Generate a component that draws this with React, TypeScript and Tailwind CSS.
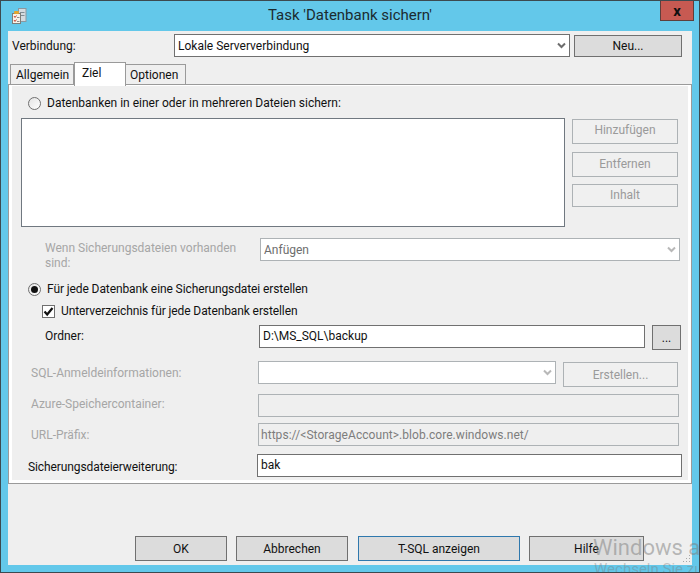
import type { ReactNode } from "react";

const FONT = "font-['Roboto','Noto_Sans',sans-serif]";

function Chevron({ muted }: { muted?: boolean }) {
  return (
    <svg width="9" height="7" viewBox="0 0 9 7" className="shrink-0">
      <path
        d="M1 1.5 L4.5 5 L8 1.5"
        fill="none"
        stroke={muted ? "#b8b8b8" : "#6d6d6d"}
        strokeWidth="2"
      />
    </svg>
  );
}

function Radio({ checked }: { checked?: boolean }) {
  return (
    <span className="w-[13px] h-[13px] shrink-0 rounded-full border border-[#6f6f6f] bg-gradient-to-br from-[#e4e4e4] to-white flex items-center justify-center">
      {checked && <span className="w-[7px] h-[7px] rounded-full bg-[#111]" />}
    </span>
  );
}

function Check() {
  return (
    <span className="w-[13px] h-[13px] shrink-0 border border-[#6f6f6f] bg-white flex items-center justify-center">
      <svg width="11" height="11" viewBox="0 0 11 11">
        <path d="M1.5 5.5 L4.2 8.5 L9.5 2" fill="none" stroke="#111" strokeWidth="2.2" />
      </svg>
    </span>
  );
}

function Btn({
  className,
  tone = "normal",
  children,
}: {
  className: string;
  tone?: "normal" | "disabled" | "focus";
  children: ReactNode;
}) {
  const toneClass =
    tone === "disabled"
      ? "border-[#adb2b5] bg-[#f0f0f0] text-[#9a9a9a]"
      : tone === "focus"
        ? "border-[#2f78ad] bg-[#dcdcdc] text-[#111]"
        : "border-[#707070] bg-[#dcdcdc] text-[#111]";
  return (
    <div className={`flex items-center justify-center border shrink-0 ${toneClass} ${className}`}>
      {children}
    </div>
  );
}

function Combo({
  className,
  disabled,
  text,
}: {
  className: string;
  disabled?: boolean;
  text?: string;
}) {
  return (
    <div
      className={`h-[23px] shrink-0 bg-white border flex items-center justify-between pl-[3px] pr-[3px] ${
        disabled ? "border-[#adb2b5] text-[#6d6d6d]" : "border-[#707070] text-[#111]"
      } ${className}`}
    >
      <span>{text}</span>
      <Chevron muted={disabled} />
    </div>
  );
}

function TaskIcon() {
  return (
    <svg width="15" height="16" viewBox="0 0 15 16">
      <rect x="6.5" y="0.5" width="7.5" height="13" fill="#d4dbe0" stroke="#8a979f" />
      <rect x="8" y="4" width="4.5" height="1" fill="#7f8c94" />
      <rect x="8" y="7" width="4.5" height="1" fill="#7f8c94" />
      <rect x="0.5" y="5.5" width="8" height="10" fill="#f6f3ea" stroke="#7d7d78" />
      <rect x="2" y="3" width="5" height="3" rx="1" fill="#e3a52f" />
      <path d="M2 8 L3 9.5 L4.5 7.5" fill="none" stroke="#c9402f" strokeWidth="1" />
      <path d="M2 12 L3 13.5 L4.5 11.5" fill="none" stroke="#c9402f" strokeWidth="1" />
      <rect x="5" y="9" width="2.5" height="1" fill="#8a8a8a" />
      <rect x="5" y="13" width="2.5" height="1" fill="#8a8a8a" />
    </svg>
  );
}

export default function App() {
  return (
    <div
      className={`${FONT} relative w-[700px] h-[573px] overflow-hidden border border-[#3c4a50] bg-[#63c8ea] text-[12px] leading-[16px] text-[#111]`}
    >
      {/* title bar */}
      <div className="h-[30px] grid grid-cols-[1fr_auto_1fr]">
        <div className="pl-[11px] pt-[7px]">
          <TaskIcon />
        </div>
        <div className="text-[15px] leading-[29px] text-[#1b2b30]">Task 'Datenbank sichern'</div>
        <div className="flex justify-end pr-[5px]">
          <div className="w-[34px] h-[21px] -mt-px bg-[#c75a52] border border-[#5e3f3c] flex items-center justify-center text-[15px] font-bold text-[#111]">
            x
          </div>
        </div>
      </div>

      <div className="mx-[7px] h-[534px] bg-[#efefef]">
        {/* connection */}
        <div className="pt-[3px] flex items-start">
          <div className="w-[166px] pl-[4px] h-[23px] leading-[24px] shrink-0">Verbindung:</div>
          <Combo className="w-[396px]" text="Lokale Serververbindung" />
          <Btn className="w-[108px] h-[22px] ml-[4px] mt-px">Neu...</Btn>
        </div>

        {/* tabs */}
        <div className="mt-[5px] h-[22px] pl-[2px] flex items-end">
          <div className="w-[64px] h-[20px] border border-b-0 border-[#9a9a9a] pl-[5px] flex items-center">
            Allgemein
          </div>
          <div className="relative z-10 w-[52px] h-[24px] -mb-[2px] border border-b-0 border-[#9a9a9a] bg-white pl-[7px] pt-[2px]">
            Ziel
          </div>
          <div className="w-[60px] h-[20px] border border-b-0 border-l-0 border-[#9a9a9a] pl-[4px] flex items-center">
            Optionen
          </div>
        </div>

        <div className="h-[400px] border border-[#9a9a9a] bg-white pt-px pb-[3px] px-[3px]">
          <div className="h-[394px] bg-[#efefef] pt-[9px]">
            <div className="h-[16px] pl-[16px] flex items-center gap-[6px]">
              <Radio />
              <span>Datenbanken in einer oder in mehreren Dateien sichern:</span>
            </div>

            <div className="mt-[7px] ml-[9px] flex items-start">
              <div className="w-[544px] h-[109px] bg-white border border-[#707880] shrink-0" />
              <div className="ml-[7px] mt-px w-[106px] flex flex-col">
                <Btn tone="disabled" className="h-[25px] pb-[3px]">Hinzufügen</Btn>
                <Btn tone="disabled" className="h-[25px] mt-[8px] pb-[2px]">Entfernen</Btn>
                <Btn tone="disabled" className="h-[23px] mt-[7px] pb-[2px]">Inhalt</Btn>
              </div>
            </div>

            <div className="mt-[11px] h-[32px] flex items-start">
              <div className="w-[248px] pl-[33px] pt-[3px] leading-[15px] text-[#a6a6a6] shrink-0">
                Wenn Sicherungsdateien vorhanden sind:
              </div>
              <Combo disabled className="w-[420px]" text="Anfügen" />
            </div>

            <div className="mt-[11px] h-[16px] pl-[16px] flex items-center gap-[6px] tracking-[-0.1px]">
              <Radio checked />
              <span>Für jede Datenbank eine Sicherungsdatei erstellen</span>
            </div>

            <div className="mt-[7px] h-[14px] pl-[30px] flex items-center gap-[6px] tracking-[-0.1px]">
              <Check />
              <span>Unterverzeichnis für jede Datenbank erstellen</span>
            </div>

            <div className="mt-[7px] h-[25px] flex items-start">
              <div className="w-[247px] pl-[33px] leading-[23px] shrink-0">Ordner:</div>
              <div className="w-[386px] h-[23px] bg-white border border-[#707070] pl-[3px] leading-[21px] shrink-0">
                D:\MS_SQL\backup
              </div>
              <Btn className="w-[29px] h-[25px] ml-[7px]">...</Btn>
            </div>

            <div className="mt-[11px] h-[26px] flex items-start text-[#a6a6a6]">
              <div className="w-[246px] pl-[19px] leading-[24px] shrink-0">SQL-Anmeldeinformationen:</div>
              <Combo disabled className="w-[298px]" />
              <Btn tone="disabled" className="w-[115px] h-[25px] ml-[7px] mt-px">Erstellen...</Btn>
            </div>

            <div className="mt-[7px] h-[23px] flex items-start text-[#a6a6a6]">
              <div className="w-[246px] pl-[19px] leading-[20px] shrink-0">Azure-Speichercontainer:</div>
              <div className="w-[421px] h-[23px] border border-[#adb2b5] bg-[#efefef] shrink-0" />
            </div>

            <div className="mt-[6px] h-[23px] flex items-start text-[#a6a6a6]">
              <div className="w-[246px] pl-[19px] leading-[24px] shrink-0">URL-Präfix:</div>
              <div className="w-[421px] h-[23px] border border-[#adb2b5] bg-[#efefef] pl-[2px] leading-[22px] text-[#7d7d7d] tracking-[0.05px] shrink-0">
                https://&lt;StorageAccount&gt;.blob.core.windows.net/
              </div>
            </div>

            <div className="mt-[8px] h-[23px] flex items-start">
              <div className="w-[245px] pl-[16px] leading-[26px] tracking-[-0.1px] shrink-0">Sicherungsdateierweiterung:</div>
              <div className="w-[425px] h-[23px] bg-white border border-[#707070] pl-[3px] leading-[21px] shrink-0">
                bak
              </div>
            </div>
          </div>
        </div>

        {/* footer buttons */}
        <div className="pt-[52px] pl-[127px] flex">
          <Btn className="w-[92px] h-[25px]">OK</Btn>
          <Btn className="w-[112px] h-[25px] ml-[9px]">Abbrechen</Btn>
          <Btn tone="focus" className="w-[162px] h-[25px] ml-[10px]">T-SQL anzeigen</Btn>
          <Btn className="w-[115px] h-[25px] ml-[9px]">Hilfe</Btn>
        </div>
      </div>

      {/* resize grip */}
      <svg width="8" height="8" viewBox="0 0 8 8" className="absolute left-[682px] top-[554px]">
        <g fill="#a8a8a8">
          <rect x="6" y="0" width="1" height="1" />
          <rect x="3" y="3" width="1" height="1" />
          <rect x="6" y="3" width="1" height="1" />
          <rect x="0" y="6" width="1" height="1" />
          <rect x="3" y="6" width="1" height="1" />
          <rect x="6" y="6" width="1" height="1" />
        </g>
      </svg>

      {/* activation watermark */}
      <div className="absolute left-[592px] top-[533px] whitespace-nowrap text-[22px] leading-[27px] text-[#7c7c7c]/50">
        Windows aktivieren
      </div>
      <div className="absolute left-[593px] top-[559px] whitespace-nowrap text-[15px] leading-[18px] text-[#7c7c7c]/40">
        Wechseln Sie zu den Einstellungen
      </div>
    </div>
  );
}
